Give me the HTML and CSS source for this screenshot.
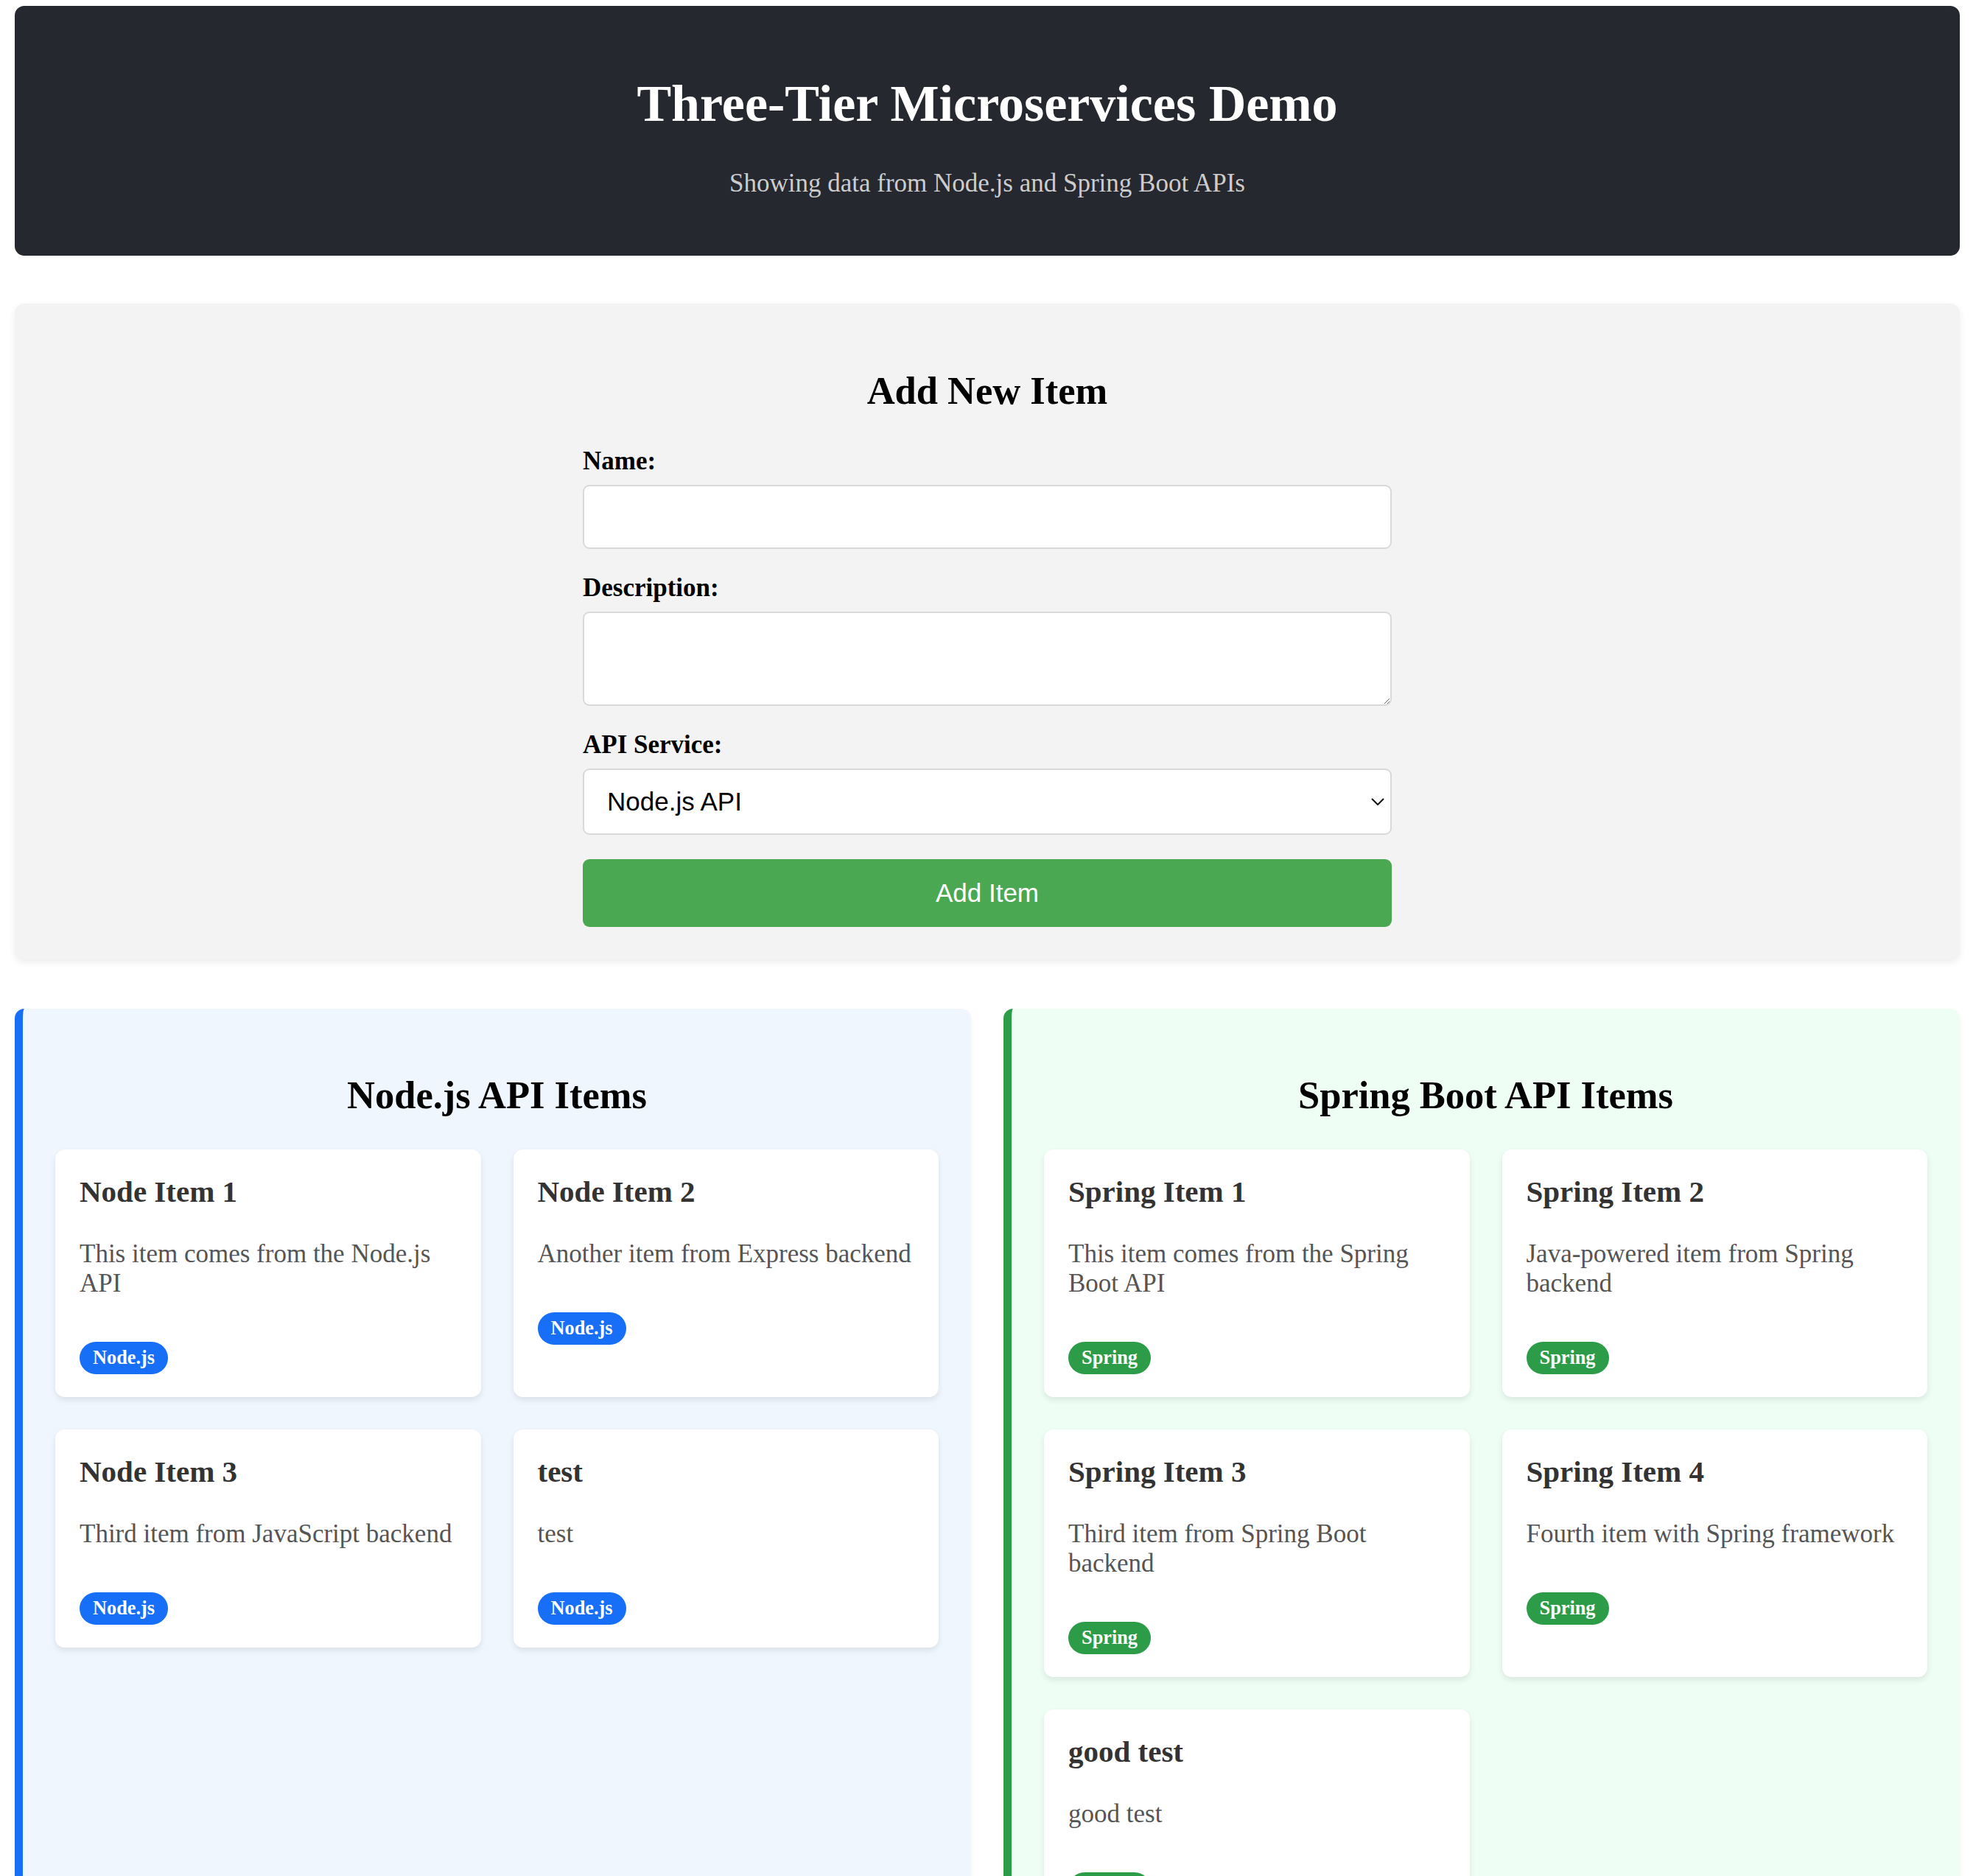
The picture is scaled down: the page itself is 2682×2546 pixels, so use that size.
FILE: index.html
```html
<!DOCTYPE html>
<html lang="en">
<head>
<meta charset="utf-8">
<title>Three-Tier Microservices Demo</title>
<link rel="stylesheet" href="styles.css">
</head>
<body>
<div class="app">
  <header class="app-header">
    <h1>Three-Tier Microservices Demo</h1>
    <p>Showing data from Node.js and Spring Boot APIs</p>
  </header>

  <section class="form-section">
    <h2>Add New Item</h2>
    <form class="item-form">
      <div class="form-group">
        <label for="name">Name:</label>
        <input id="name" type="text" class="field">
      </div>
      <div class="form-group">
        <label for="desc">Description:</label>
        <textarea id="desc" class="field field-area"></textarea>
      </div>
      <div class="form-group">
        <label for="api">API Service:</label>
        <div class="select-wrap">
          <select id="api" class="field field-select">
            <option>Node.js API</option>
            <option>Spring Boot API</option>
          </select>
          <svg class="chev" width="18" height="10" viewBox="0 0 18 10"><polyline points="1,1 9,9 17,1" fill="none" stroke="#111" stroke-width="2"/></svg>
        </div>
      </div>
      <button type="button" class="submit">Add Item</button>
    </form>
  </section>

  <div class="columns">
    <section class="col col-node">
      <h2>Node.js API Items</h2>
      <div class="items">
        <div class="card">
          <h3>Node Item 1</h3>
          <p>This item comes from the Node.js API</p>
          <div class="badge-row"><span class="badge badge-node">Node.js</span></div>
        </div>
        <div class="card">
          <h3>Node Item 2</h3>
          <p>Another item from Express backend</p>
          <div class="badge-row"><span class="badge badge-node">Node.js</span></div>
        </div>
        <div class="card">
          <h3>Node Item 3</h3>
          <p>Third item from JavaScript backend</p>
          <div class="badge-row"><span class="badge badge-node">Node.js</span></div>
        </div>
        <div class="card">
          <h3>test</h3>
          <p>test</p>
          <div class="badge-row"><span class="badge badge-node">Node.js</span></div>
        </div>
      </div>
    </section>
    <section class="col col-spring">
      <h2>Spring Boot API Items</h2>
      <div class="items">
        <div class="card">
          <h3>Spring Item 1</h3>
          <p>This item comes from the Spring Boot API</p>
          <div class="badge-row"><span class="badge badge-spring">Spring</span></div>
        </div>
        <div class="card">
          <h3>Spring Item 2</h3>
          <p>Java-powered item from Spring backend</p>
          <div class="badge-row"><span class="badge badge-spring">Spring</span></div>
        </div>
        <div class="card">
          <h3>Spring Item 3</h3>
          <p>Third item from Spring Boot backend</p>
          <div class="badge-row"><span class="badge badge-spring">Spring</span></div>
        </div>
        <div class="card">
          <h3>Spring Item 4</h3>
          <p>Fourth item with Spring framework</p>
          <div class="badge-row"><span class="badge badge-spring">Spring</span></div>
        </div>
        <div class="card">
          <h3>good test</h3>
          <p>good test</p>
          <div class="badge-row"><span class="badge badge-spring">Spring</span></div>
        </div>
      </div>
    </section>
  </div>
</div>
</body>
</html>
```

FILE: styles.css
```css
html, body {
  margin: 0;
  padding: 0;
  background: #ffffff;
}

body {
  font-family: "Liberation Serif", "Times New Roman", serif;
  font-size: 35px;
  color: #000;
}

.app {
  padding: 8px 22px 44px 20px;
}

.app-header {
  background: #25282f;
  color: #ffffff;
  border-radius: 13px;
  padding: 44px;
  text-align: center;
  margin-bottom: 65px;
}

.app-header h1 {
  font-size: 70px;
  font-weight: bold;
  margin: 49px 0 48px;
}

.app-header p {
  font-size: 35px;
  color: #cccccc;
  margin: 35px 0 34px;
}

.form-section {
  background: #f3f3f3;
  border-radius: 13px;
  padding: 44px;
  box-shadow: 0 4px 10px rgba(0, 0, 0, 0.08);
}

.form-section h2,
.col h2 {
  font-size: 52.5px;
  font-weight: bold;
  text-align: center;
  margin: 43.6px 0;
}

.form-section h2 {
  margin-bottom: 46px;
}

.item-form {
  max-width: 1098px;
  margin: 0 auto;
}

.form-group {
  margin-bottom: 33px;
}

.form-group label {
  display: block;
  font-weight: bold;
  font-size: 35px;
  margin-bottom: 12px;
}

.field {
  display: block;
  width: 100%;
  box-sizing: border-box;
  height: 87px;
  padding: 22px;
  border: 2px solid #d9d9d9;
  border-radius: 9px;
  background: #ffffff;
  font-family: "Liberation Sans", Arial, sans-serif;
  font-size: 35px;
  color: #000;
  margin: 0;
}

.field-area {
  height: 128px;
}

.select-wrap {
  position: relative;
}

.field-select {
  -webkit-appearance: none;
  appearance: none;
  height: 90px;
  padding: 0 50px 0 31px;
}

.chev {
  position: absolute;
  right: 10px;
  top: 40px;
  pointer-events: none;
}

.submit {
  display: block;
  width: 100%;
  height: 92px;
  border: none;
  border-radius: 9px;
  background: #4aa853;
  color: #ffffff;
  font-family: "Liberation Sans", Arial, sans-serif;
  font-size: 35px;
  padding: 0;
  margin: 0;
}

.columns {
  display: grid;
  grid-template-columns: 1fr 1fr;
  gap: 44px;
  margin-top: 67px;
}

.col {
  border-radius: 13px;
  padding: 44px;
  border-left: 11px solid;
  box-shadow: 0 4px 10px rgba(0, 0, 0, 0.05);
}

.col-node {
  background: #eff6fe;
  border-left-color: #166ff6;
}

.col-spring {
  background: #effef4;
  border-left-color: #2d9c48;
}

.items {
  display: grid;
  grid-template-columns: 1fr 1fr;
  gap: 44px;
}

.card {
  background: #ffffff;
  border-radius: 13px;
  padding: 33px 33px 31px;
  box-shadow: 0 4px 9px rgba(0, 0, 0, 0.09);
}

.card h3 {
  font-size: 41px;
  font-weight: bold;
  color: #333333;
  margin: 0 0 41.5px;
}

.card p {
  font-size: 35px;
  color: #555555;
  margin: 0;
}

.badge-row {
  display: flex;
  margin-top: 58.5px;
}

.badge {
  display: inline-block;
  font-size: 26.3px;
  line-height: 30px;
  font-weight: bold;
  color: #ffffff;
  padding: 7px 18px;
  border-radius: 22px;
}

.badge-node {
  background: #166ff6;
}

.badge-spring {
  background: #2d9c48;
}
```
